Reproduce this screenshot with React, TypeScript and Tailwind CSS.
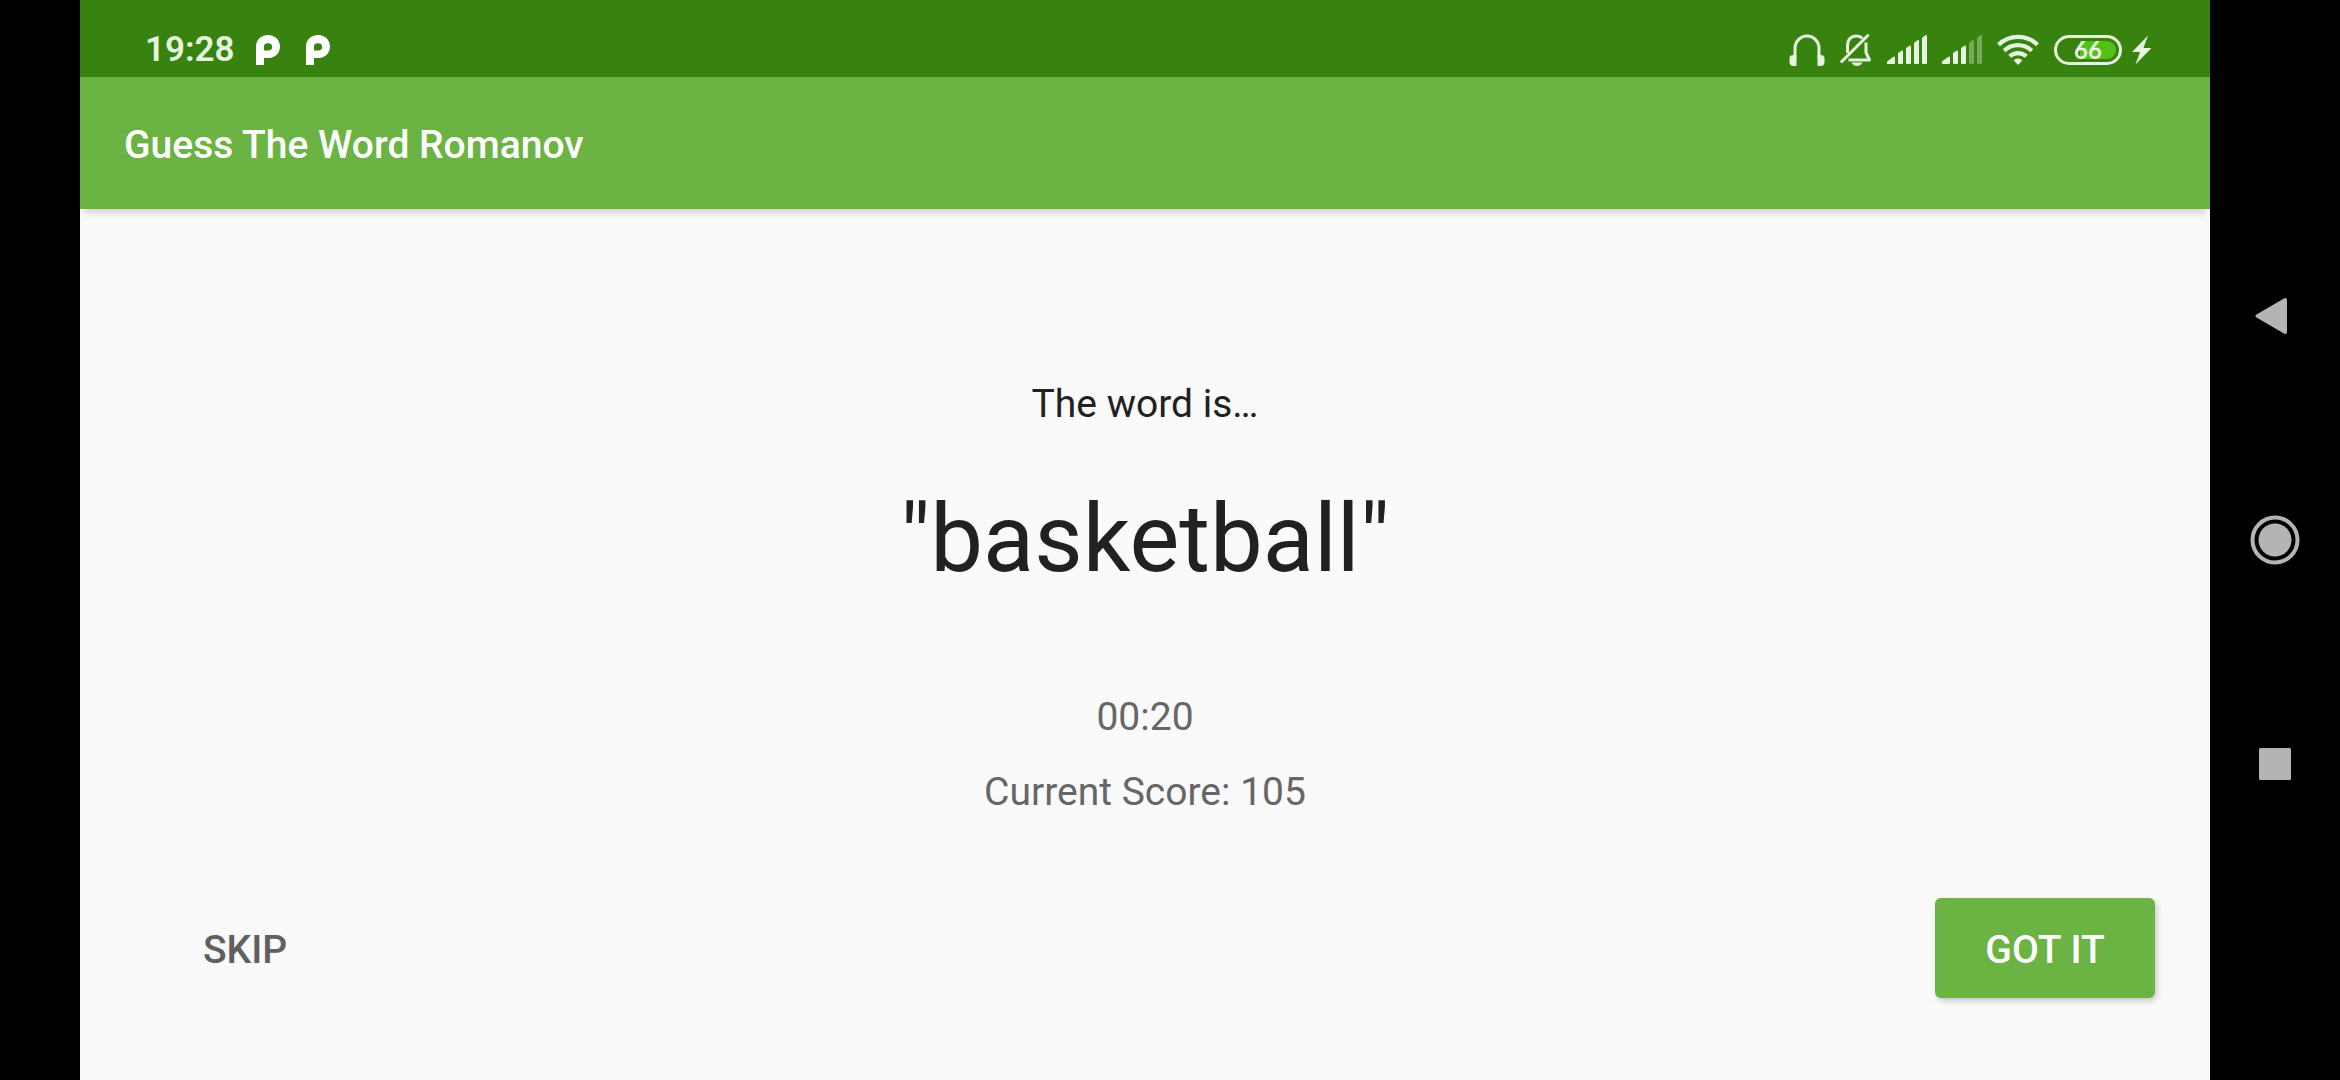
import React from "react";

const ICON = "#e6f3df";

function AppGlyph() {
  return (
    <svg width="24" height="30" viewBox="0 0 24 30" fill="none" aria-hidden="true">
      <path
        fill="#ffffff"
        fillRule="evenodd"
        d="M0 30V11.500C0 5 5 0 12 0s12 5 12 11.500S19 23 13 23H8v7ZM8 15.500h4.500c2.200 0 3.700-1.500 3.700-3.500s-1.500-3.700-3.700-3.700H11.500C9.500 8.300 8 9.500 8 11.500Z"
      />
    </svg>
  );
}

function Headphones() {
  return (
    <svg width="36" height="32" viewBox="0 0 36 32" fill="none" aria-hidden="true">
      <path d="M6 24V14.500a12 12.500 0 0 1 24 0V24" stroke={ICON} strokeWidth="3" />
      <path d="M7.500 21v11H4.500C2 32 .5 30.500 .5 28v-3.500C.5 22 2 21 4.500 21Z" fill={ICON} />
      <path d="M28.500 21v11h3c2.500 0 4-1.500 4-4v-3.500c0-2.500-1.500-3.500-4-3.500Z" fill={ICON} />
    </svg>
  );
}

function BellOff() {
  return (
    <svg width="32" height="32" viewBox="0 0 32 32" fill="none" aria-hidden="true">
      <path d="M7.500 19V12C7.500 5.500 11 2 16.500 2c2.300 0 4.500.7 6 2.200" stroke={ICON} strokeWidth="3" />
      <path d="M26 8.500V18.500L29.500 26H8.500" stroke={ICON} strokeWidth="3" strokeLinejoin="round" />
      <path d="M1.800 27.500 27.800 1.500" stroke={ICON} strokeWidth="3" strokeLinecap="round" />
      <path d="M11.500 28.500h11c-1 2.200-3 3.500-5.500 3.500s-4.500-1.300-5.500-3.500Z" fill={ICON} />
    </svg>
  );
}

function Signal({ bars, label }: { bars: number; label: string }) {
  const shapes = [
    "M0 30V27.500L6 23Q8 22 8 23.500V29Q8 30 7 30Z",
    "M11 29V19L14 17Q16 16 16 17.500V29Q16 30 15 30H12Q11 30 11 29Z",
    "M19 29V14L22 12Q24 11 24 12.500V29Q24 30 23 30H20Q19 30 19 29Z",
    "M27 29V9L30 6.500Q32 5.500 32 7V29Q32 30 31 30H28Q27 30 27 29Z",
    "M35 29V4L38 1.500Q40 .5 40 2V29Q40 30 39 30H36Q35 30 35 29Z",
  ];
  return (
    <svg width="40" height="31" viewBox="0 0 40 31" role="img" aria-label={label}>
      {shapes.map((d, i) => (
        <path key={d} d={d} fill={i < bars ? ICON : "#76aa5a"} />
      ))}
    </svg>
  );
}

function Wifi() {
  return (
    <svg width="42" height="31" viewBox="0 0 42 31" fill="none" aria-hidden="true">
      <g stroke={ICON} strokeWidth="4.200">
        <path d="M1.500 10.700A28 28 0 0 1 40.500 10.700" />
        <path d="M7.200 16.700A20 20 0 0 1 34.800 16.700" />
        <path d="M12.700 22.300A12.200 12.200 0 0 1 29.300 22.300" />
      </g>
      <path d="M21 24.500c2 0 3.300.8 4.200 1.900L21 31l-4.200-4.600c.9-1.100 2.200-1.900 4.200-1.900Z" fill={ICON} />
    </svg>
  );
}

function Bolt() {
  return (
    <svg width="20" height="30" viewBox="0 0 20 30" aria-hidden="true">
      <path d="M16 .5 0 17h8L3.500 29.500 19.500 13H11.500Z" fill={ICON} />
    </svg>
  );
}

function Battery({ level }: { level: number }) {
  return (
    <div className="flex h-[30px] w-[68px] rounded-full border-[3px] border-[#e6f3df] p-[3px]">
      <div className="flex flex-1 items-center justify-center rounded-full bg-linear-to-r from-transparent from-35% to-[#54c018] to-35%">
        <span className="font-['Lato'] text-[24px] leading-none font-bold text-[#e6f3df]">{level}</span>
      </div>
    </div>
  );
}

function StatusBar() {
  return (
    <div className="flex h-[77px] items-center justify-between bg-[#38820f] pt-[22px] pr-[58px] pl-[65px]">
      <div className="flex items-center gap-[21px]">
        <time className="text-[35px] leading-[56px] font-semibold text-[#e6f3df]">19:28</time>
        <div className="flex gap-[26px]">
          <AppGlyph />
          <AppGlyph />
        </div>
      </div>
      <div className="flex items-center gap-[15px]">
        <Headphones />
        <BellOff />
        <Signal bars={5} label="SIM 1 signal" />
        <Signal bars={3} label="SIM 2 signal" />
        <Wifi />
        <div className="flex items-center gap-[10px]">
          <Battery level={66} />
          <Bolt />
        </div>
      </div>
    </div>
  );
}

function NavBar() {
  return (
    <nav className="flex w-[130px] flex-col items-center justify-center gap-44 bg-black">
      <button type="button" aria-label="Back" className="size-12">
        <svg viewBox="0 0 48 48" fill="#b4b4b4">
          <path d="M5.500 22.500 32.500 6.700Q36 5 36 8V40Q36 43 32.500 41.300L5.500 25.500Q3.500 24 5.500 22.500Z" />
        </svg>
      </button>
      <button type="button" aria-label="Home" className="size-12">
        <svg viewBox="0 0 48 48" className="overflow-visible">
          <circle cx="24" cy="24" r="22.500" fill="none" stroke="#b4b4b4" strokeWidth="4" />
          <circle cx="24" cy="24" r="16.500" fill="#b4b4b4" />
        </svg>
      </button>
      <button type="button" aria-label="Recent apps" className="size-12">
        <svg viewBox="0 0 48 48" fill="#b4b4b4">
          <rect x="8" y="8" width="32" height="32" rx="1.500" />
        </svg>
      </button>
    </nav>
  );
}

export default function App() {
  return (
    <div className="flex min-h-screen bg-black pl-20 font-['Roboto',sans-serif]">
      <div className="flex flex-1 flex-col bg-[#fafafa]">
        <StatusBar />
        <header className="flex h-[132px] items-center bg-[#6bb343] px-11 pt-[3px] shadow-[0_8px_8px_-4px_rgba(0,0,0,0.16)]">
          <h1 className="text-[39px] leading-[48px] font-medium text-white">Guess The Word Romanov</h1>
        </header>
        <main className="flex flex-1 flex-col justify-end pb-[82px] text-center text-[39px] leading-[48px]">
          <p className="text-[#212121]">The word is…</p>
          <h2 className="mt-[55px] text-[94px] leading-[112px] text-[#212121]">"basketball"</h2>
          <p className="mt-[98px] text-[#666666]">00:20</p>
          <p className="mt-[27px] text-[#666666]">Current Score: 105</p>
          <div className="mt-[82px] flex justify-between px-[55px] font-medium">
            <button type="button" className="h-[100px] w-[220px] rounded-md pt-[3px] text-[#606060]">
              SKIP
            </button>
            <button
              type="button"
              className="h-[100px] w-[220px] rounded-md bg-[#6bb343] pt-[3px] text-white shadow-[2px_3px_6px_rgba(0,0,0,0.2)]"
            >
              GOT IT
            </button>
          </div>
        </main>
      </div>
      <NavBar />
    </div>
  );
}
